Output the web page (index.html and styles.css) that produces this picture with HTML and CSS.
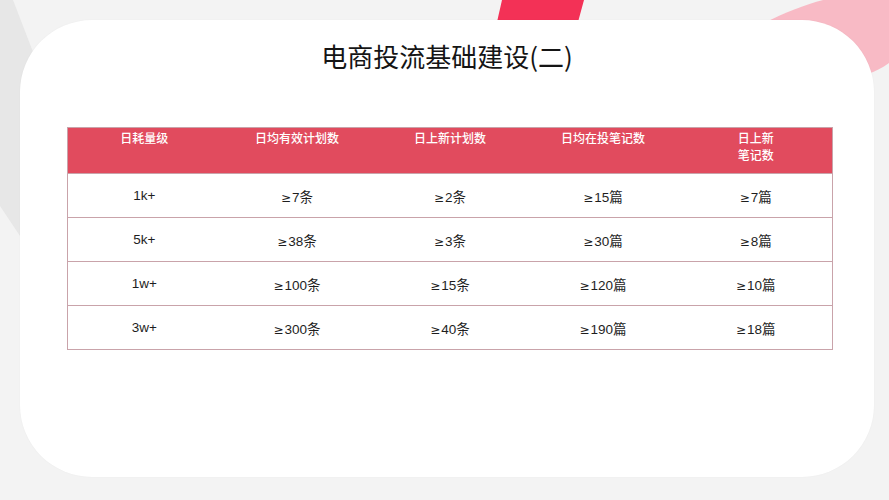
FILE: index.html
```html
<!DOCTYPE html>
<html lang="zh-CN">
<head>
<meta charset="utf-8">
<title>电商投流基础建设(二)</title>
<link rel="stylesheet" href="styles.css">
</head>
<body>
<div class="slide">
  <svg class="deco" width="889" height="500" viewBox="0 0 889 500" aria-hidden="true">
    <polygon points="0,0 13,0 40,70 40,240 20,236 0,206" fill="#e7e7e7"/>
    <polygon points="502,0 584,0 578,22 497,22" fill="#f33156"/>
    <path d="M762,24 C790,10 812,2 832,-2 L889,-2 L889,63 C882,68 876,71 868,74 L800,74 Z" fill="#f8bac5"/>
  </svg>
  <div class="card">
    <h1 class="title">电商投流基础建设(二)</h1>
    <table class="grid">
      <thead>
        <tr>
          <th>日耗量级</th>
          <th>日均有效计划数</th>
          <th>日上新计划数</th>
          <th>日均在投笔记数</th>
          <th><span class="hl">日上新</span><span class="hl">笔记数</span></th>
        </tr>
      </thead>
      <tbody>
        <tr><td>1k+</td><td><span class="ge">≥</span>7条</td><td><span class="ge">≥</span>2条</td><td><span class="ge">≥</span>15篇</td><td><span class="ge">≥</span>7篇</td></tr>
        <tr><td>5k+</td><td><span class="ge">≥</span>38条</td><td><span class="ge">≥</span>3条</td><td><span class="ge">≥</span>30篇</td><td><span class="ge">≥</span>8篇</td></tr>
        <tr><td>1w+</td><td><span class="ge">≥</span>100条</td><td><span class="ge">≥</span>15条</td><td><span class="ge">≥</span>120篇</td><td><span class="ge">≥</span>10篇</td></tr>
        <tr><td>3w+</td><td><span class="ge">≥</span>300条</td><td><span class="ge">≥</span>40条</td><td><span class="ge">≥</span>190篇</td><td><span class="ge">≥</span>18篇</td></tr>
      </tbody>
    </table>
  </div>
</div>
</body>
</html>
```
FILE: styles.css
```css
html, body {
  margin: 0;
  padding: 0;
}
body {
  background: #f3f3f3;
  font-family: "Liberation Sans", "Noto Sans CJK SC", sans-serif;
}
.slide {
  position: relative;
  width: 889px;
  height: 500px;
  overflow: hidden;
  padding: 20px 15px 23px 20px;
  box-sizing: border-box;
  display: flex;
}
.deco {
  position: absolute;
  left: 0;
  top: 0;
}
.card {
  position: relative;
  flex: 1;
  background: #ffffff;
  border-radius: 72px;
  display: flex;
  flex-direction: column;
  box-shadow: 0 0 2px rgba(0,0,0,0.04);
}
.title {
  margin: 19px 0 0 0;
  font-family: "Noto Sans CJK SC", sans-serif;
  font-weight: 400;
  font-size: 26px;
  line-height: 34px;
  color: #151515;
  text-align: center;
}
.grid {
  margin: 54px 0 0 47px;
  width: 766px;
  border-collapse: collapse;
  table-layout: fixed;
  border: 1px solid #c9a3aa;
}
.grid th {
  background: #e14b5e;
  color: #ffffff;
  font-family: "Noto Sans CJK SC", sans-serif;
  font-weight: 500;
  font-size: 12px;
  line-height: 17px;
  height: 44px;
  padding: 1px 0 0 0;
  vertical-align: top;
  text-align: center;
  border: none;
  border-bottom: 1px solid #c9a3aa;
}
.hl {
  display: block;
  height: 17px;
}
.grid td {
  height: 43px;
  padding: 0;
  text-align: center;
  vertical-align: middle;
  font-size: 13.5px;
  color: #1e1e1e;
  border-bottom: 1px solid #c9a3aa;
}
.ge {
  font-family: "DejaVu Sans", sans-serif;
  font-size: 12px;
  margin-right: 1px;
}
```
